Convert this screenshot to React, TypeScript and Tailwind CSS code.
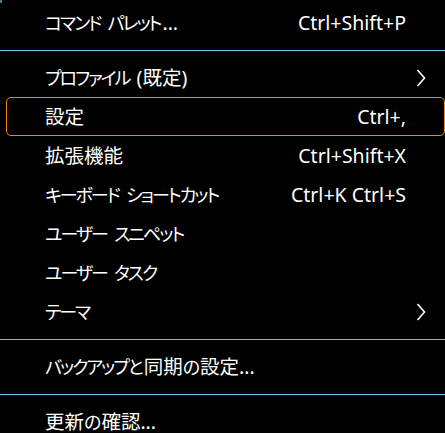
import React from 'react';

type Item =
  | { kind: 'item'; label: string; keys?: string; submenu?: boolean; active?: boolean }
  | { kind: 'sep' };

const items: Item[] = [
  { kind: 'item', label: 'コマンド パレット...', keys: 'Ctrl+Shift+P' },
  { kind: 'sep' },
  { kind: 'item', label: 'プロファイル (既定)', submenu: true },
  { kind: 'item', label: '設定', keys: 'Ctrl+,', active: true },
  { kind: 'item', label: '拡張機能', keys: 'Ctrl+Shift+X' },
  { kind: 'item', label: 'キーボード ショートカット', keys: 'Ctrl+K Ctrl+S' },
  { kind: 'item', label: 'ユーザー スニペット' },
  { kind: 'item', label: 'ユーザー タスク' },
  { kind: 'item', label: 'テーマ', submenu: true },
  { kind: 'sep' },
  { kind: 'item', label: 'バックアップと同期の設定...' },
  { kind: 'sep' },
  { kind: 'item', label: '更新の確認...' },
];

// Yu Gothic UI draws kana smaller and narrower than Noto CJK, so shrink kana runs only
function Label({ text }: { text: string }) {
  const parts = text.split(/([\u3040-\u30ff]+)/).filter(Boolean);
  return (
    <>
      {parts.map((p, i) =>
        /[\u3040-\u30ff]/.test(p) ? (
          <span key={i} className="text-[18px]">
            <span className="tracking-[-2px]">{p.slice(0, -1)}</span>
            {p.slice(-1)}
          </span>
        ) : (
          <span key={i}>{p}</span>
        ),
      )}
    </>
  );
}

function Chevron() {
  return (
    <svg width="10" height="18" viewBox="0 0 10 18" className="block">
      <polyline
        points="1.5,1 8.5,9 1.5,17"
        fill="none"
        stroke="#ffffff"
        strokeWidth="1.6"
      />
    </svg>
  );
}

export default function App() {
  return (
    <div className="relative w-[445px] h-[433px] overflow-hidden bg-black pt-[3px] text-white text-[19.5px] leading-none [font-family:'Noto_Sans','Noto_Sans_CJK_JP',sans-serif] [font-feature-settings:'palt']">
      {/* menu border corner peeking in at the top-left */}
      <div className="absolute left-0 top-0 h-[3px] w-[2px] bg-[#3d7b92]" />
      {items.map((item, i) =>
        item.kind === 'sep' ? (
          <div key={i} className="h-[16px] pt-[8px]">
            <div className="h-px bg-[#6fc3df]" />
          </div>
        ) : (
          <div
            key={i}
            className={
              'mx-[6px] mr-0 flex h-[39px] items-center rounded-[5px] border pl-[38px] ' +
              (item.active ? 'border-[#f38518]' : 'border-transparent')
            }
          >
            <span className="flex-1 whitespace-nowrap">
              <Label text={item.label} />
            </span>
            {item.keys && <span className="whitespace-nowrap">{item.keys}</span>}
            <span className="flex w-[38px] justify-start pl-[10px]">
              {item.submenu && <Chevron />}
            </span>
          </div>
        ),
      )}
    </div>
  );
}
